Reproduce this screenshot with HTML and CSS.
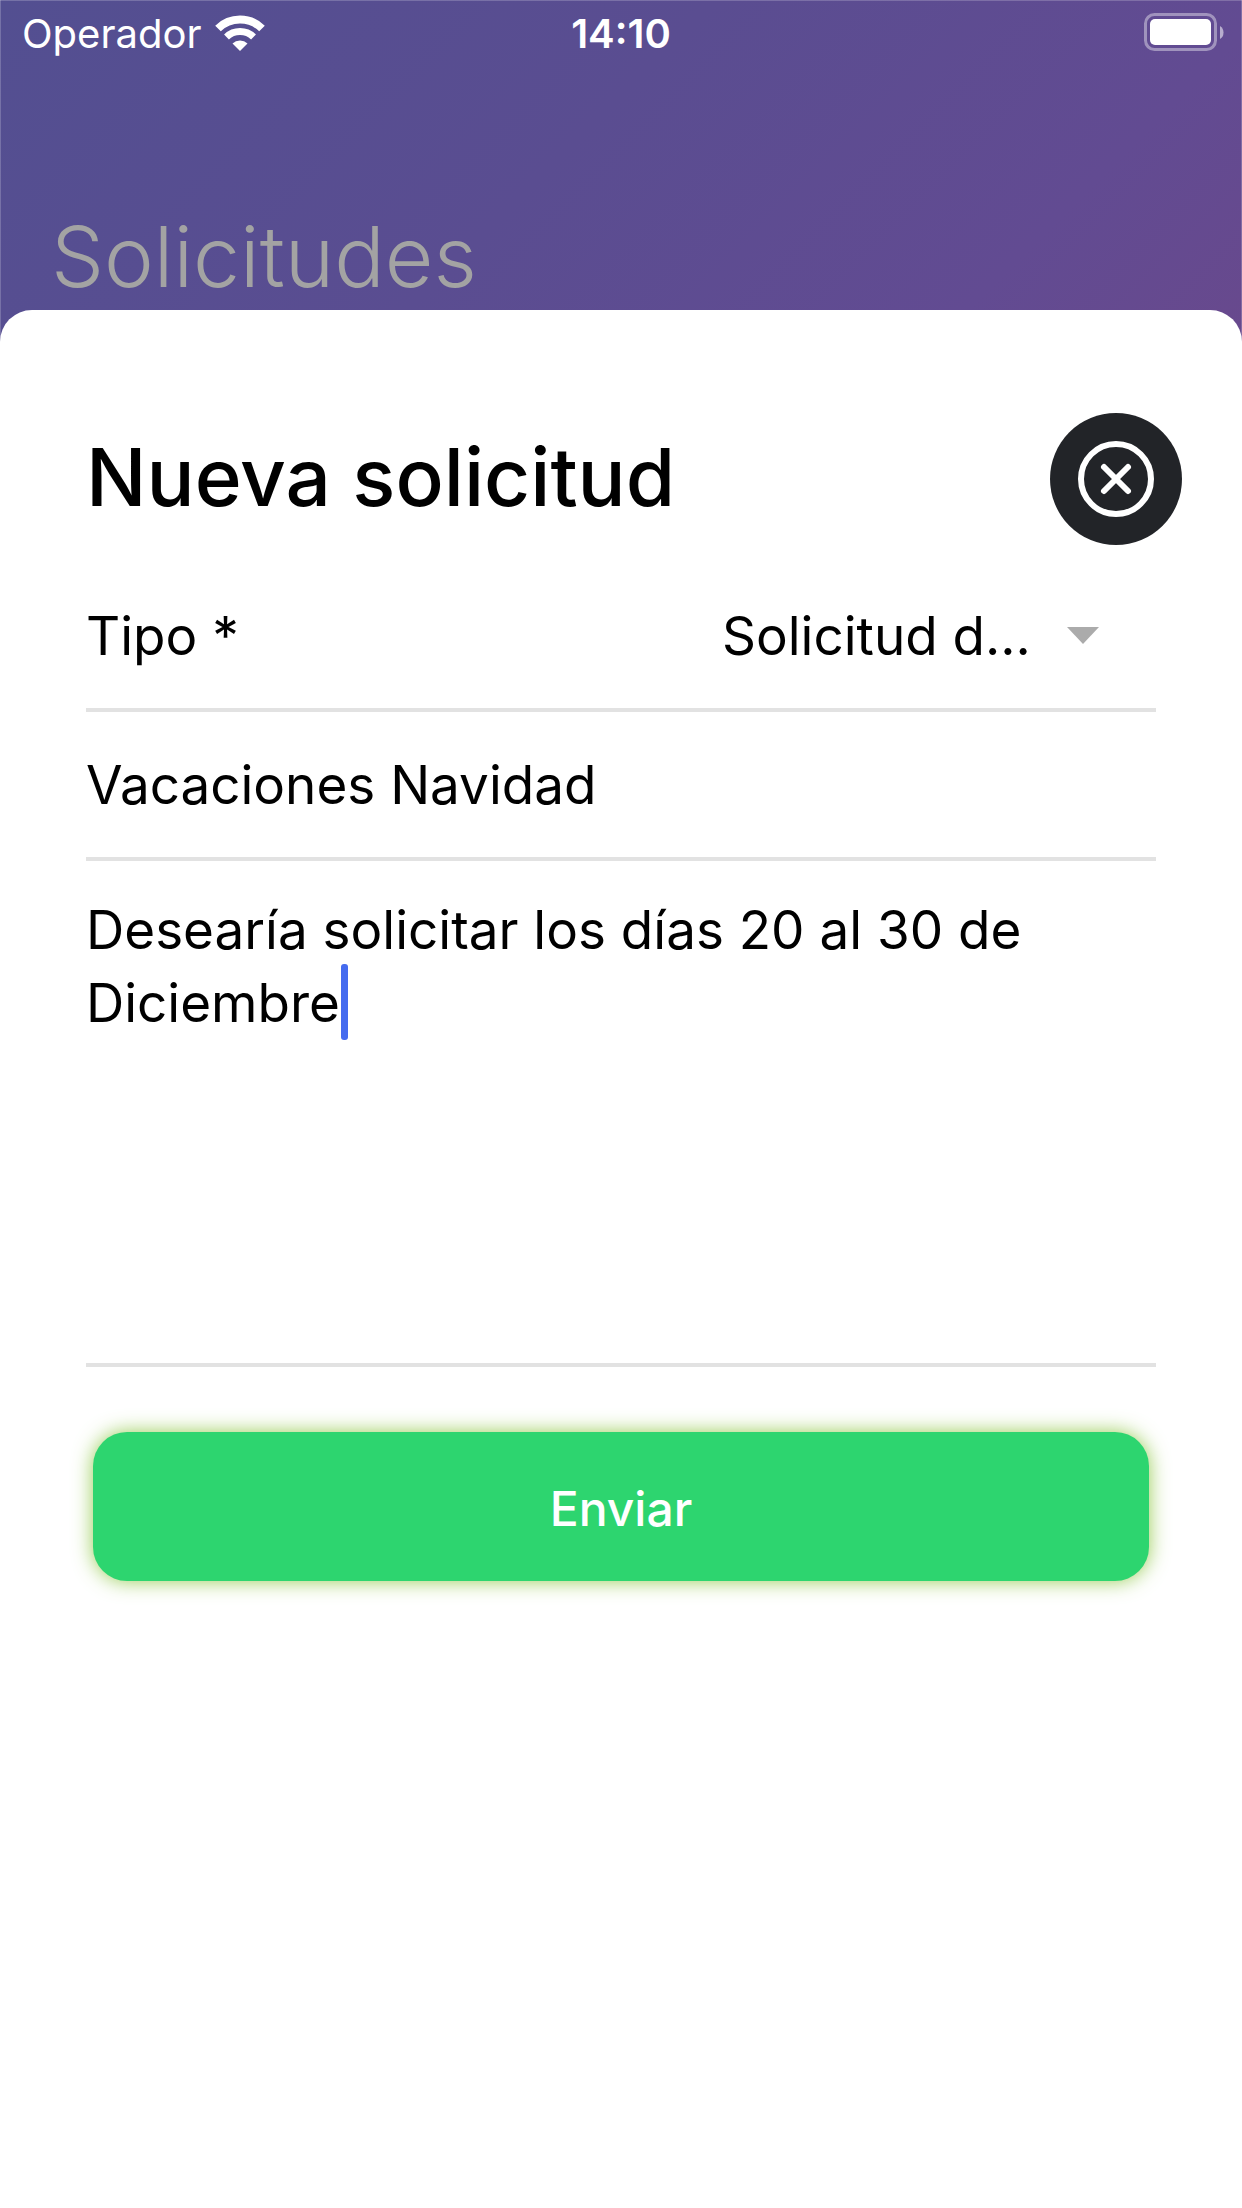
FILE: index.html
```html
<!DOCTYPE html>
<html lang="es">
<head>
<meta charset="utf-8">
<meta name="viewport" content="width=device-width, initial-scale=1">
<title>Nueva solicitud</title>
<link rel="stylesheet" href="styles.css">
</head>
<body>
<div class="app">
  <header class="header">
    <div class="status">
      <div class="carrier">
        <span>Operador</span>
        <svg class="wifi" viewBox="0 0 50 38" aria-hidden="true">
          <g fill="none" stroke="#fff" stroke-width="8">
            <path d="M3 14.500A31.500 31.500 0 0 1 47 14.500"/>
            <path d="M11.500 23A19.500 19.500 0 0 1 38.500 23" stroke-width="7"/>
          </g>
          <path d="M17.500 29.500A11 11 0 0 1 32.500 29.500L25 37Z" fill="#fff"/>
        </svg>
      </div>
      <span class="clock">14:10</span>
      <svg class="battery" viewBox="0 0 80 40" aria-hidden="true">
        <rect x="1.500" y="1.500" width="70" height="35" rx="9" fill="none" stroke="#fff" stroke-opacity=".4" stroke-width="3"/>
        <rect x="6" y="6" width="61" height="26" rx="5" fill="#fff"/>
        <path d="M76 13q3.500 2 3.500 6.500t-3.500 6.500z" fill="#fff" fill-opacity=".55"/>
      </svg>
    </div>
    <h1 class="page-title">Solicitudes</h1>
  </header>
  <main class="sheet">
    <form class="form">
      <div class="sheet-head">
        <h2 class="sheet-title">Nueva solicitud</h2>
        <button class="close" type="button" aria-label="Cerrar">
          <svg viewBox="0 0 132 132" aria-hidden="true">
            <circle cx="66" cy="66" r="35" fill="none" stroke="#fff" stroke-width="6"/>
            <path d="M54 54L78 78M78 54L54 78" fill="none" stroke="#fff" stroke-width="6" stroke-linecap="round"/>
          </svg>
        </button>
      </div>
      <div class="field type-field">
        <label for="tipo">Tipo *</label>
        <div class="picker">
          <select id="tipo" class="control"><option>Solicitud d...</option></select>
          <svg class="arrow" viewBox="0 0 32 17" aria-hidden="true"><path d="M0 0H32L16 17Z" fill="#ababab"/></svg>
        </div>
      </div>
      <div class="field">
        <input class="control" type="text" aria-label="Asunto" value="Vacaciones Navidad">
      </div>
      <div class="field message-field">
        <textarea class="control message" aria-label="Mensaje" spellcheck="false">Desearía solicitar los días 20 al 30 de Diciembre</textarea>
        <span class="caret"></span>
      </div>
      <button class="send" type="submit">Enviar</button>
    </form>
  </main>
</div>
</body>
</html>
```
FILE: styles.css
```css
* { box-sizing: border-box; }

body {
  margin: 0;
  font-family: Inter, "Liberation Sans", sans-serif;
  font-size: 53px;
  color: #000;
  background: #fff;
}

h1, h2 { margin: 0; }

.app {
  min-height: 100vh;
  display: flex;
  flex-direction: column;
}

.header {
  padding: 1px 22px 40px;
  background: linear-gradient(135deg, #534f91, #5a4d91 45%, #624b92 80%, #68498d);
  box-shadow: inset 0 1px rgba(255, 255, 255, .2), inset 1px 0 rgba(255, 255, 255, .2), inset -1px 0 rgba(255, 255, 255, .2);
  color: #fff;
}

.status {
  display: grid;
  grid-template-columns: 1fr auto 1fr;
  align-items: center;
  height: 64px;
  font-size: 40px;
}

.carrier { display: flex; align-items: center; gap: 14px; }
.wifi { width: 50px; height: 38px; }
.clock { font-weight: 600; }
.battery { width: 80px; height: 40px; justify-self: end; margin-right: -4px; }

.page-title {
  margin: 138px 0 0 29px;
  font-size: 84px;
  line-height: 108px;
  font-weight: 300;
  color: #a3a3a3;
}

.sheet {
  flex: 1;
  margin-top: -41px;
  padding: 103px 86px;
  border-radius: 32px 32px 0 0;
  background: #fff;
}

.form { display: flex; flex-direction: column; }

.sheet-head {
  display: flex;
  align-items: center;
  justify-content: space-between;
  margin-right: -26px;
}

.sheet-title {
  padding-bottom: 6px;
  font-size: 80px;
  font-weight: 500;
}

.close {
  flex: none;
  width: 132px;
  height: 132px;
  padding: 0;
  border: 0;
  border-radius: 50%;
  background: #222428;
}

.close svg { display: block; }

.field {
  position: relative;
  display: flex;
  align-items: center;
  height: 149px;
  border-bottom: 4px solid #e2e2e2;
}

.type-field { height: 167px; justify-content: space-between; padding-top: 18px; }

.control {
  width: 100%;
  padding: 0;
  border: 0;
  outline: 0;
  background: none;
  font: inherit;
  color: inherit;
}

.picker { display: flex; align-items: center; gap: 36px; padding-right: 57px; }
.picker .control { width: auto; appearance: none; }
.arrow { width: 32px; height: 17px; }

.message-field { height: 506px; align-items: stretch; padding-top: 33px; }

.message {
  display: block;
  line-height: 73px;
  resize: none;
  overflow: hidden;
}

.caret {
  position: absolute;
  left: 255px;
  top: 103px;
  width: 7px;
  height: 76px;
  border-radius: 3px;
  background: #456bef;
}

.send {
  height: 149px;
  margin: 65px 7px 0;
  padding-top: 4px;
  border: 0;
  border-radius: 34px;
  background: #2dd56f;
  box-shadow: 0 0 20px rgba(125, 190, 40, .8);
  font: 500 48px Inter, "Liberation Sans", sans-serif;
  color: #fff;
}
```
